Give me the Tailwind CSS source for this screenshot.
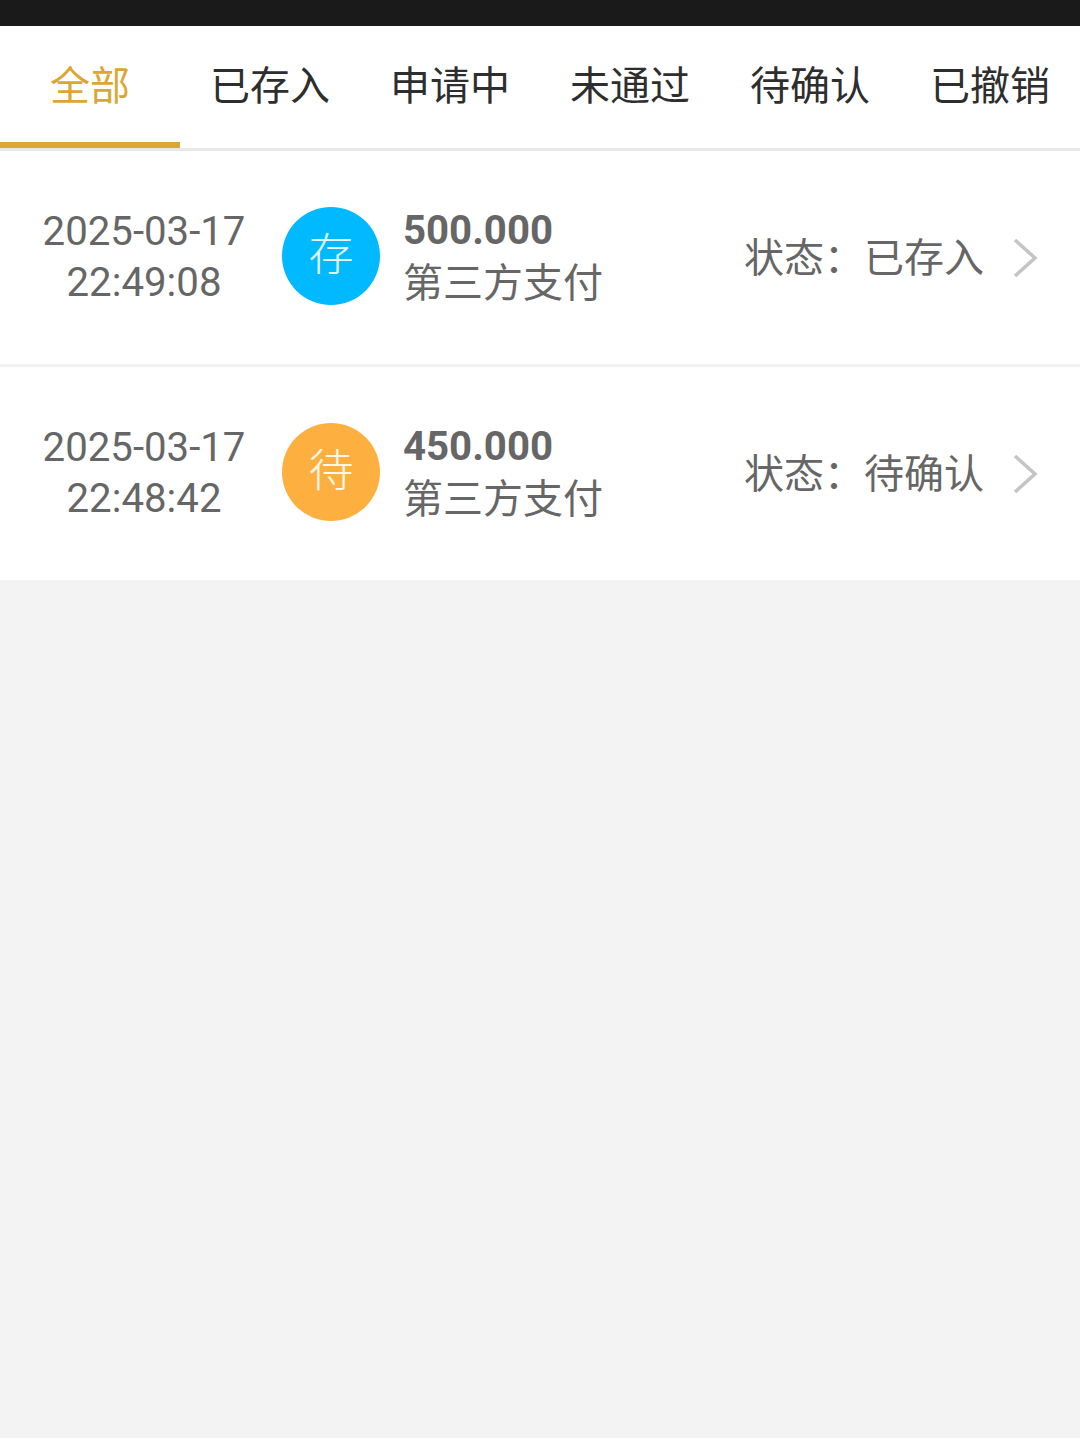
<!DOCTYPE html>
<html lang="zh">
<head>
    <meta charset="UTF-8">
    <title>存款记录</title>
    <script src="https://cdn.jsdelivr.net/npm/@tailwindcss/browser@4"></script>
</head>
<body class="h-[1438px] w-[1080px] overflow-hidden bg-[#f3f3f3] font-['Roboto','Noto_Sans_CJK_SC',sans-serif]">
    <div class="h-[26px] bg-[#1a1a1a]"></div>
    <!-- tabs -->
    <nav class="flex h-[125px] border-b-[3px] border-[#e8e8e8] bg-white text-[40px] text-[#2e2e2e]">
        <div class="flex h-[122px] w-[180px] items-center justify-center border-b-[6px] border-[#dba732] pt-[6px] text-[#dba732]">全部</div>
        <div class="flex w-[180px] items-center justify-center">已存入</div>
        <div class="flex w-[180px] items-center justify-center">申请中</div>
        <div class="flex w-[180px] items-center justify-center">未通过</div>
        <div class="flex w-[180px] items-center justify-center">待确认</div>
        <div class="flex w-[180px] items-center justify-center">已撤销</div>
    </nav>
    <!-- list -->
    <div class="flex h-[216px] items-center border-b-[3px] border-[#f2f2f2] bg-white text-[#666]">
        <div class="mb-[2px] w-[282px] pl-[6px] text-center text-[40.2px] leading-[51px]"><p>2025-03-17</p><p>22:49:08</p></div>
        <div class="mb-[3px] flex size-[98px] items-center justify-center rounded-full bg-[#00b9ff] text-[45px] font-light text-white/90">存</div>
        <div class="ml-[23px] flex-1"><p class="text-[40.2px] leading-[50px] font-bold">500.000</p><p class="mt-[2px] text-[40px] leading-[52px]">第三方支付</p></div>
        <div class="mt-[2px] text-[40px]">状态：已存入</div>
        <svg class="mr-[42px] ml-[28px]" width="26" height="42" viewBox="0 0 26 42" fill="none" stroke="#c4c4c4" stroke-width="3.5"><path d="M3 3l20 18-20 18"/></svg>
    </div>
    <div class="flex h-[213px] items-center bg-white text-[#666]">
        <div class="mb-[2px] w-[282px] pl-[6px] text-center text-[40.2px] leading-[51px]"><p>2025-03-17</p><p>22:48:42</p></div>
        <div class="mb-[3px] flex size-[98px] items-center justify-center rounded-full bg-[#fdb03f] text-[45px] font-light text-white/90">待</div>
        <div class="ml-[23px] flex-1"><p class="text-[40.2px] leading-[50px] font-bold">450.000</p><p class="mt-[2px] text-[40px] leading-[52px]">第三方支付</p></div>
        <div class="mt-[2px] text-[40px]">状态：待确认</div>
        <svg class="mr-[42px] ml-[28px]" width="26" height="42" viewBox="0 0 26 42" fill="none" stroke="#c4c4c4" stroke-width="3.5"><path d="M3 3l20 18-20 18"/></svg>
    </div>
</body>
</html>
